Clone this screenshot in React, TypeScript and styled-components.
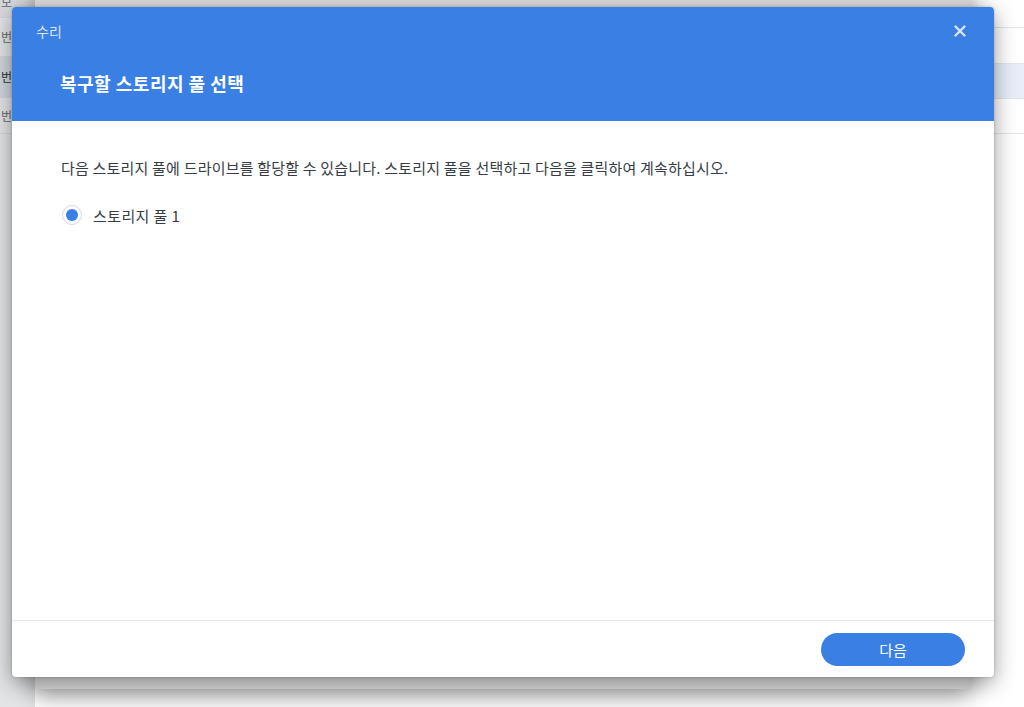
import React from "react";
import styled, { createGlobalStyle } from "styled-components";

const Blue = "#3a7fe3";
const TextColor = "#363d45";

const GlobalStyle = createGlobalStyle`
  html, body {
    margin: 0;
    padding: 0;
    background: #ffffff;
  }
  body {
    font-family: "Noto Sans CJK KR", "Noto Sans", sans-serif;
  }
`;

const Page = styled.div`
  position: relative;
  width: 1024px;
  height: 707px;
  overflow: hidden;
  display: flex;
`;

const LeftPane = styled.div`
  width: 35px;
  flex-shrink: 0;
  background: #e3e4e6;
  display: flex;
  flex-direction: column;
`;

const LeftRow = styled.div<{ $h: number; $selected?: boolean; $top?: boolean }>`
  height: ${(p) => p.$h}px;
  flex-shrink: 0;
  display: flex;
  align-items: ${(p) => (p.$top ? "flex-start" : "center")};
  justify-content: flex-end;
  padding-right: 23px;
  border-bottom: 1px solid #d3d6da;
  background: ${(p) => (p.$selected ? "#d0d5dc" : p.$top ? "#d8dadd" : "transparent")};
  font-size: 12px;
  color: ${(p) => (p.$selected ? "#2d3238" : "#656a71")};
  white-space: nowrap;
  overflow: hidden;
  line-height: 1;
  span {
    margin-top: ${(p) => (p.$top ? "-4px" : "0")};
  }
`;

const RightPane = styled.div`
  flex: 1;
  background: #ffffff;
  display: flex;
  flex-direction: column;
`;

const TableRow = styled.div<{ $h: number; $selected?: boolean }>`
  height: ${(p) => p.$h}px;
  flex-shrink: 0;
  border-bottom: 1px solid #e3e6ea;
  background: ${(p) => (p.$selected ? "#e7eef9" : "transparent")};
`;

const BackWindow = styled.div`
  position: absolute;
  left: 35px;
  top: -20px;
  width: 935px;
  height: 709px;
  background: #dcdcdc;
  border-radius: 4px;
  box-shadow: 0 8px 22px rgba(0, 0, 0, 0.34);
`;

const Modal = styled.div`
  position: absolute;
  left: 12px;
  top: 7px;
  width: 982px;
  height: 670px;
  background: #ffffff;
  border-radius: 4px;
  overflow: hidden;
  display: flex;
  flex-direction: column;
  box-shadow: 0 6px 22px rgba(0, 0, 0, 0.4), 0 0 3px rgba(0, 0, 0, 0.2);
`;

const Header = styled.div`
  background: ${Blue};
  height: 114px;
  flex-shrink: 0;
  display: flex;
  flex-direction: column;
`;

const TopBar = styled.div`
  height: 48px;
  display: flex;
  align-items: center;
  justify-content: space-between;
  padding: 0 27px 0 24px;
`;

const WindowName = styled.div`
  font-size: 14px;
  color: rgba(255, 255, 255, 0.82);
  line-height: 1;
`;

const CloseButton = styled.button`
  width: 14px;
  height: 14px;
  padding: 0;
  border: 0;
  background: transparent;
  display: flex;
  align-items: center;
  justify-content: center;
  cursor: pointer;
`;

const Title = styled.h1`
  margin: 16px 0 0 48px;
  font-size: 18px;
  font-weight: 700;
  letter-spacing: 0.5px;
  line-height: 24px;
  color: #ffffff;
`;

const Body = styled.div`
  flex: 1;
  padding: 37px 49px 0;
  display: flex;
  flex-direction: column;
  gap: 26px;
`;

const Description = styled.p`
  margin: 0;
  font-size: 15px;
  letter-spacing: 0.2px;
  line-height: 20px;
  color: ${TextColor};
`;

const RadioRow = styled.label`
  display: flex;
  align-items: center;
  gap: 11px;
  height: 22px;
  font-size: 15px;
  letter-spacing: 0.4px;
  color: ${TextColor};
  cursor: pointer;
`;

const RadioOuter = styled.span`
  width: 20px;
  height: 20px;
  box-sizing: border-box;
  border-radius: 50%;
  border: 1px solid #d3dae4;
  background: #ffffff;
  display: flex;
  align-items: center;
  justify-content: center;
  margin-left: 1px;
`;

const RadioDot = styled.span`
  width: 12px;
  height: 12px;
  border-radius: 50%;
  background: ${Blue};
`;

const Footer = styled.div`
  height: 56px;
  flex-shrink: 0;
  border-top: 1px solid #e4e8ee;
  display: flex;
  align-items: center;
  justify-content: flex-end;
  padding-right: 29px;
`;

const PrimaryButton = styled.button`
  width: 144px;
  height: 33px;
  border: 0;
  border-radius: 17px;
  background: ${Blue};
  color: #ffffff;
  font-family: inherit;
  font-size: 15px;
  cursor: pointer;
`;

const CloseIcon = () => (
  <svg width="12" height="12" viewBox="0 0 12 12">
    <path
      d="M1.5 1.5 L10.5 10.5 M10.5 1.5 L1.5 10.5"
      stroke="rgba(255,255,255,0.8)"
      strokeWidth="2.4"
      strokeLinecap="round"
    />
  </svg>
);

export default function App() {
  return (
    <>
      <GlobalStyle />
      <Page>
        <LeftPane>
          <LeftRow $h={17} $top>
            <span>정보</span>
          </LeftRow>
          <LeftRow $h={38}>
            <span>번</span>
          </LeftRow>
          <LeftRow $h={40} $selected>
            <span>번</span>
          </LeftRow>
          <LeftRow $h={35}>
            <span>번</span>
          </LeftRow>
        </LeftPane>
        <RightPane>
          <TableRow $h={27} />
          <TableRow $h={35} />
          <TableRow $h={34} $selected />
          <TableRow $h={34} />
        </RightPane>

        <BackWindow />

        <Modal>
          <Header>
            <TopBar>
              <WindowName>수리</WindowName>
              <CloseButton aria-label="닫기">
                <CloseIcon />
              </CloseButton>
            </TopBar>
            <Title>복구할 스토리지 풀 선택</Title>
          </Header>
          <Body>
            <Description>
              다음 스토리지 풀에 드라이브를 할당할 수 있습니다. 스토리지 풀을 선택하고 다음을 클릭하여 계속하십시오.
            </Description>
            <RadioRow>
              <RadioOuter>
                <RadioDot />
              </RadioOuter>
              스토리지 풀 1
            </RadioRow>
          </Body>
          <Footer>
            <PrimaryButton>다음</PrimaryButton>
          </Footer>
        </Modal>
      </Page>
    </>
  );
}
